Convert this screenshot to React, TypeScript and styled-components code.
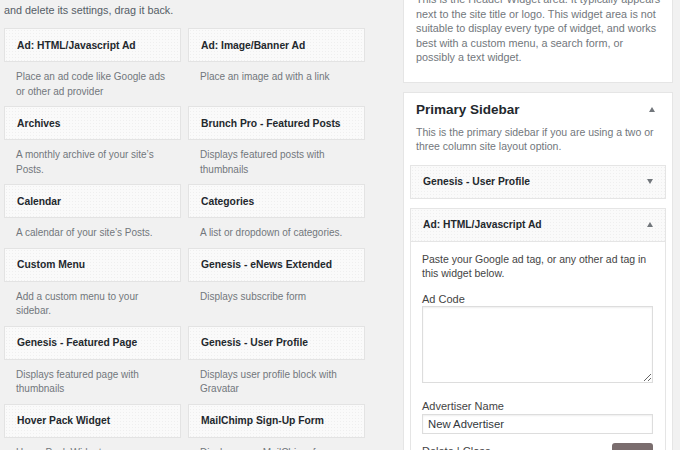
import styled, { createGlobalStyle } from "styled-components";

const GlobalStyle = createGlobalStyle`
    html, body {
        margin: 0;
        padding: 0;
        background: #f1f1f1;
        overflow: hidden;
    }
    body {
        font-family: "Liberation Sans", Arial, sans-serif;
        color: #444;
    }
`;

const widgets = [
    { title: "Ad: HTML/Javascript Ad", desc: "Place an ad code like Google ads or other ad provider" },
    { title: "Ad: Image/Banner Ad", desc: "Place an image ad with a link" },
    { title: "Archives", desc: "A monthly archive of your site’s Posts." },
    { title: "Brunch Pro - Featured Posts", desc: "Displays featured posts with thumbnails" },
    { title: "Calendar", desc: "A calendar of your site’s Posts." },
    { title: "Categories", desc: "A list or dropdown of categories." },
    { title: "Custom Menu", desc: "Add a custom menu to your sidebar." },
    { title: "Genesis - eNews Extended", desc: "Displays subscribe form" },
    { title: "Genesis - Featured Page", desc: "Displays featured page with thumbnails" },
    { title: "Genesis - User Profile", desc: "Displays user profile block with Gravatar" },
    { title: "Hover Pack Widget", desc: "Hover Pack Widget" },
    { title: "MailChimp Sign-Up Form", desc: "Displays your MailChimp for WordPress sign-up form" },
];

const App = () => {
    return (
        <>
            <GlobalStyle />
            <Page>
                <Available>
                    <Intro>and delete its settings, drag it back.</Intro>
                    <WidgetGrid>
                        {widgets.map((w) => (
                            <WidgetItem key={w.title}>
                                <WidgetCard>
                                    <WidgetTitle>{w.title}</WidgetTitle>
                                </WidgetCard>
                                <WidgetDesc>{w.desc}</WidgetDesc>
                            </WidgetItem>
                        ))}
                    </WidgetGrid>
                </Available>

                <Sidebars>
                    <AreaPanel $first>
                        <AreaDesc $top>
                            This is the Header Widget area. It typically appears next to the site title or logo. This widget area is not suitable to display every type of widget, and works best with a custom menu, a search form, or possibly a text widget.
                        </AreaDesc>
                    </AreaPanel>

                    <AreaPanel>
                        <AreaHeader>
                            <AreaTitle>Primary Sidebar</AreaTitle>
                            <Arrow $up />
                        </AreaHeader>
                        <AreaDesc>
                            This is the primary sidebar if you are using a two or three column site layout option.
                        </AreaDesc>

                        <PlacedWidget>
                            <PlacedHeader>
                                <WidgetTitle>Genesis - User Profile</WidgetTitle>
                                <Arrow />
                            </PlacedHeader>
                        </PlacedWidget>

                        <PlacedWidget>
                            <PlacedHeader $open>
                                <WidgetTitle>Ad: HTML/Javascript Ad</WidgetTitle>
                                <Arrow $up />
                            </PlacedHeader>
                            <PlacedBody>
                                <BodyText>Paste your Google ad tag, or any other ad tag in this widget below.</BodyText>
                                <FieldLabel>Ad Code</FieldLabel>
                                <CodeArea />
                                <FieldLabel $gap>Advertiser Name</FieldLabel>
                                <TextInput defaultValue="New Advertiser" />
                                <Actions>
                                    <Links>
                                        Delete | Close
                                    </Links>
                                    <SaveButton>Save</SaveButton>
                                </Actions>
                            </PlacedBody>
                        </PlacedWidget>
                    </AreaPanel>
                </Sidebars>
            </Page>
        </>
    );
};

export default App;

const Page = styled.div`
    display: flex;
    width: 680px;
    height: 450px;
    padding-left: 4px;
    box-sizing: border-box;
    overflow: hidden;
`;

const Available = styled.div`
    width: 361px;
    flex-shrink: 0;
`;

const Intro = styled.p`
    margin: 2px 0 10px 0;
    font-size: 10.8px;
    line-height: 16px;
    color: #555d66;
`;

const WidgetGrid = styled.div`
    display: grid;
    grid-template-columns: 177px 177px;
    column-gap: 7px;
`;

const WidgetItem = styled.div`
    display: flex;
    flex-direction: column;
`;

const dotted = `
    background-color: #fafafa;
    background-image: radial-gradient(#efefef 0.6px, transparent 0.7px);
    background-size: 3px 3px;
`;

const WidgetCard = styled.div`
    height: 34px;
    box-sizing: border-box;
    border: 1px solid #e3e3e3;
    ${dotted}
    display: flex;
    align-items: center;
    padding-left: 12px;
`;

const WidgetTitle = styled.span`
    font-size: 10.3px;
    font-weight: 700;
    color: #23282d;
`;

const WidgetDesc = styled.div`
    padding: 8px 12px 7px 12px;
    font-size: 10px;
    line-height: 14.5px;
    color: #72777c;
`;

const Sidebars = styled.div`
    width: 270px;
    margin-left: 38px;
    margin-top: -9px;
    flex-shrink: 0;
    display: flex;
    flex-direction: column;
    gap: 9px;
`;

const AreaPanel = styled.div<{ $first?: boolean }>`
    background: #fff;
    border: 1px solid #e5e5e5;
    padding: ${(p) => (p.$first ? "0 8px 17px 12px" : "7px 6px 0 6px")};
    flex: ${(p) => (p.$first ? "0 0 auto" : "1 1 auto")};
`;

const AreaHeader = styled.div`
    display: flex;
    align-items: center;
    justify-content: space-between;
    padding: 0 11px 0 6px;
    height: 20px;
`;

const AreaTitle = styled.h2`
    margin: 0;
    font-size: 13.5px;
    font-weight: 700;
    color: #23282d;
`;

const Arrow = styled.span<{ $up?: boolean }>`
    width: 0;
    height: 0;
    border-left: 3.5px solid transparent;
    border-right: 3.5px solid transparent;
    ${(p) => (p.$up ? "border-bottom: 5px solid #72777c;" : "border-top: 5px solid #72777c;")}
`;

const AreaDesc = styled.p<{ $top?: boolean }>`
    margin: ${(p) => (p.$top ? "0" : "5px 6px 11px 6px")};
    font-size: ${(p) => (p.$top ? "10.8px" : "10.5px")};
    line-height: 14.5px;
    color: #72777c;
`;

const PlacedWidget = styled.div`
    margin-bottom: 9px;
    border: 1px solid #e5e5e5;
`;

const PlacedHeader = styled.div<{ $open?: boolean }>`
    height: 32px;
    ${dotted}
    display: flex;
    align-items: center;
    justify-content: space-between;
    padding: 0 12px 0 12px;
    border-bottom: ${(p) => (p.$open ? "1px solid #e5e5e5" : "none")};
`;

const PlacedBody = styled.div`
    background: #fff;
    padding: 10px 12px 10px 11px;
`;

const BodyText = styled.p`
    margin: 0 0 11px 0;
    font-size: 10.5px;
    line-height: 14.5px;
    color: #444;
`;

const FieldLabel = styled.label<{ $gap?: boolean }>`
    display: block;
    margin-top: ${(p) => (p.$gap ? "16px" : "0")};
    font-size: 11px;
    line-height: 14.5px;
    color: #444;
`;

const CodeArea = styled.textarea`
    display: block;
    width: 100%;
    height: 77px;
    box-sizing: border-box;
    border: 1px solid #ddd;
    box-shadow: inset 0 1px 2px rgba(0, 0, 0, 0.07);
    margin: 0;
    font-family: inherit;
`;

const TextInput = styled.input`
    display: block;
    width: 100%;
    height: 20px;
    box-sizing: border-box;
    border: 1px solid #ddd;
    box-shadow: inset 0 1px 2px rgba(0, 0, 0, 0.07);
    padding: 0 5px;
    margin: 0;
    font-family: "Liberation Sans", Arial, sans-serif;
    font-size: 11.3px;
    color: #32373c;
`;

const Actions = styled.div`
    display: flex;
    justify-content: space-between;
    align-items: flex-start;
    margin-top: 9px;
`;

const Links = styled.span`
    font-size: 11px;
    line-height: 14px;
    margin-top: 1px;
    color: #444;
`;

const SaveButton = styled.button`
    width: 41px;
    height: 24px;
    border: none;
    border-radius: 3px;
    background: #7a6d6e;
    color: #fff;
    font-family: "Liberation Sans", Arial, sans-serif;
    font-size: 11px;
`;
